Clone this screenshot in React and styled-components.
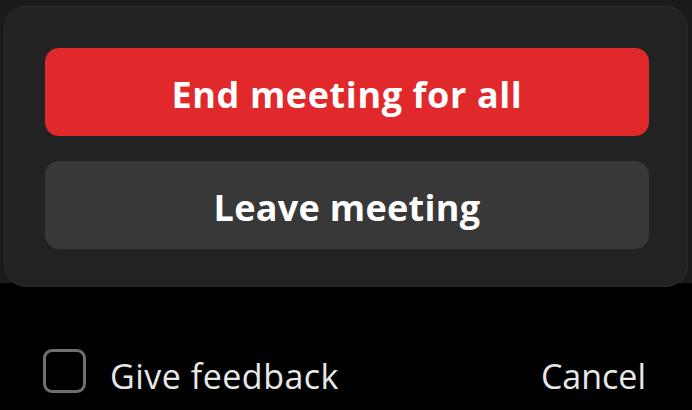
import React, { useState } from 'react';
import styled, { createGlobalStyle } from 'styled-components';

const GlobalStyle = createGlobalStyle`
  html, body {
    margin: 0;
    padding: 0;
    background: #000000;
  }
  body {
    width: 692px;
    height: 410px;
    overflow: hidden;
    font-family: "Open Sans", "Noto Sans", "Liberation Sans", sans-serif;
    -webkit-font-smoothing: antialiased;
  }
`;

const LeaveDialog = () => {
  const [feedback, setFeedback] = useState(false);

  return (
    <Screen>
      <GlobalStyle />
      <Backdrop>
        <Panel>
          <ActionButton $variant="danger">End meeting for all</ActionButton>
          <ActionButton>Leave meeting</ActionButton>
        </Panel>
      </Backdrop>
      <Footer>
        <CheckLabel>
          <CheckBox
            type="checkbox"
            checked={feedback}
            onChange={(e) => setFeedback(e.target.checked)}
          />
          <LabelText>Give feedback</LabelText>
        </CheckLabel>
        <TextButton>Cancel</TextButton>
      </Footer>
    </Screen>
  );
};

export default LeaveDialog;

const Screen = styled.div`
  width: 692px;
  height: 410px;
  display: flex;
  flex-direction: column;
  background: #000000;
`;

const Backdrop = styled.div`
  height: 283px;
  padding: 6px 4px 0;
  box-sizing: border-box;
  background: #1b1b1b;
`;

const Panel = styled.div`
  height: 281px;
  box-sizing: border-box;
  padding: 41px 38px 0 40px;
  display: flex;
  flex-direction: column;
  gap: 25px;
  background: #222222;
  border: 1px solid #2b2b2b;
  border-radius: 22px;
`;

const ActionButton = styled.button`
  height: 88px;
  width: 100%;
  border: none;
  border-radius: 14px;
  padding: 5px 0 0;
  background: ${({ $variant }) => ($variant === 'danger' ? '#e1282b' : '#383838')};
  color: #ffffff;
  font-family: inherit;
  font-size: 36px;
  font-weight: 700;
  letter-spacing: ${({ $variant }) => ($variant === 'danger' ? '0.6px' : '0.3px')};
  cursor: pointer;
`;

const Footer = styled.div`
  flex: 1;
  display: flex;
  align-items: center;
  justify-content: space-between;
  padding: 49px 46px 0 43px;
`;

const CheckLabel = styled.label`
  display: flex;
  align-items: center;
  gap: 24px;
  color: #e8e8e8;
  font-size: 34px;
  letter-spacing: 0.5px;
`;

const LabelText = styled.span`
  padding-top: 9px;
`;

const CheckBox = styled.input`
  appearance: none;
  margin: 0;
  width: 43px;
  height: 44px;
  box-sizing: border-box;
  border: 3px solid #6f6f6f;
  border-radius: 9px;
  background: transparent;
`;

const TextButton = styled.button`
  border: none;
  background: none;
  padding: 9px 0 0;
  color: #e8e8e8;
  font-family: inherit;
  font-size: 34px;
  cursor: pointer;
`;
